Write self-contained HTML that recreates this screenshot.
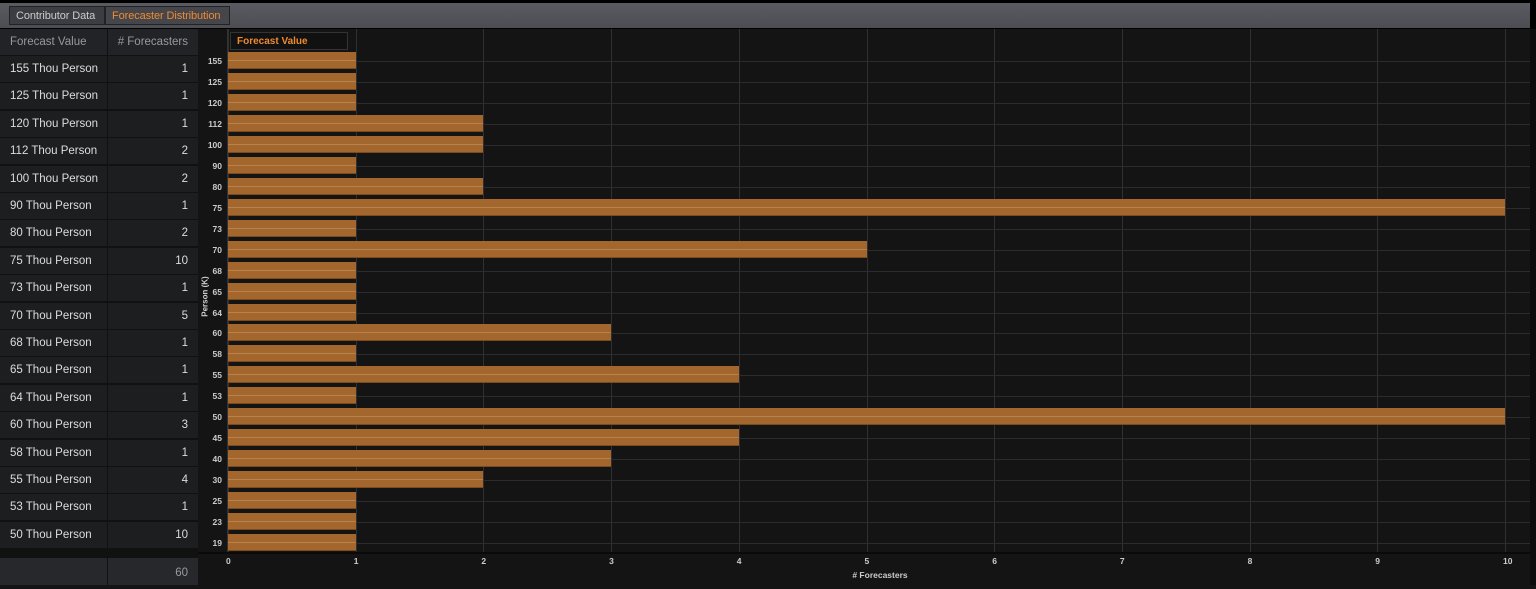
<!DOCTYPE html><html><head><style>
body{margin:0;width:1536px;height:585px;background:#141414;overflow:hidden;font-family:"Liberation Sans",sans-serif;position:relative}
.a{position:absolute}
.top{left:0;top:0;width:1536px;height:29px;background:#000}
.bar0{left:0;top:3px;width:1530px;height:25px;background:linear-gradient(#5a5b62,#4c4d53)}
.tab{top:6px;height:19px;border:1px solid #222;font-size:11px;line-height:18px;padding:0 6px;box-sizing:border-box;white-space:nowrap;letter-spacing:-0.1px}
.cell{height:27px;box-sizing:border-box;font-size:11.5px;line-height:27px;color:#ddd;border-bottom:1px solid #111;white-space:nowrap}
.c1{left:0;width:107px;background:#1d1e20;padding-left:10px}
.c2{left:108px;width:90px;background:#1d1e20;text-align:right;padding-right:10px}
.gv{width:1px;background:#303030;top:29px;height:523px}
.gh{height:1px;background:#2c2c2c;left:228px;width:1302px}
.b{left:228px;height:17px;background:#a3662c;box-shadow:inset 0 -1px 0 #7a4b1f}
.b:after{content:"";position:absolute;left:0;right:0;top:8px;height:1px;background:#b7824d}
.yl{left:200px;width:22px;text-align:right;font-size:8.5px;font-weight:bold;color:#ccc}
.xl{top:556px;font-size:8.5px;font-weight:bold;color:#ccc}
</style></head><body>
<div class="a top"></div><div class="a bar0"></div>
<div class="a tab" style="left:9px;width:96px;background:#3c3d42;color:#ccc">Contributor Data</div>
<div class="a tab" style="left:105px;width:125px;background:#45464c;color:#f08a30">Forecaster Distribution</div>
<div class="a" style="left:198px;top:29px;width:30px;height:556px;background:#141414"></div>
<div class="a" style="left:0;top:29px;width:198px;height:556px;background:#111"></div>
<div class="a cell c1" style="top:29px;color:#999;background:#222326">Forecast Value</div>
<div class="a cell c2" style="top:29px;color:#999;background:#222326"># Forecasters</div>
<div id="rows"></div>
<div class="a" style="left:0;top:558px;width:107px;height:27px;background:#27282c"></div>
<div class="a" style="left:108px;top:558px;width:90px;height:27px;background:#27282c;color:#999;font-size:11.5px;line-height:31px;text-align:right;padding-right:10px;box-sizing:border-box">60</div>
<div class="a" style="left:227px;top:29px;width:1303px;height:523px;background:#141414;border-left:1px solid #333"></div>
<div class="a" style="left:1530px;top:29px;width:6px;height:556px;background:#0c0c0c"></div>
<div class="a" style="left:198px;top:552px;width:1332px;height:2px;background:#0a0a0a"></div>
<div id="ch"></div>
<div class="a" style="left:230px;top:32px;width:118px;height:18px;background:#111;border:1px solid #333;color:#f08a30;font-size:10px;font-weight:bold;line-height:18px;padding-left:6px;box-sizing:border-box">Forecast Value</div>
<div class="a" style="left:183px;top:292px;width:44px;font-size:8px;font-weight:bold;color:#ccc;transform:rotate(-90deg);text-align:center">Person (K)</div>
<div class="a" style="left:830px;top:570px;width:100px;text-align:center;font-size:8.5px;font-weight:bold;color:#ccc"># Forecasters</div>
<script>
var d=[[155,1],[125,1],[120,1],[112,2],[100,2],[90,1],[80,2],[75,10],[73,1],[70,5],[68,1],[65,1],[64,1],[60,3],[58,1],[55,4],[53,1],[50,10]];
var h='';d.forEach(function(r,i){var y=56+i*27.4;h+='<div class="a cell c1" style="top:'+y+'px">'+r[0]+' Thou Person</div><div class="a cell c2" style="top:'+y+'px">'+r[1]+'</div>';});
document.getElementById('rows').innerHTML=h;
var c=[[155,1],[125,1],[120,1],[112,2],[100,2],[90,1],[80,2],[75,10],[73,1],[70,5],[68,1],[65,1],[64,1],[60,3],[58,1],[55,4],[53,1],[50,10],[45,4],[40,3],[30,2],[25,1],[23,1],[19,1]];
var s=127.7,g='';
for(var k=0;k<=10;k++)g+='<div class="a gv" style="left:'+(228+k*s)+'px"></div><div class="a xl" style="left:'+(226+k*s)+'px">'+k+'</div>';
c.forEach(function(r,i){var cy=60+i*20.96;g+='<div class="a gh" style="top:'+(cy+1)+'px"></div>';});
c.forEach(function(r,i){var cy=60+i*20.96;g+='<div class="a b" style="top:'+(cy-8)+'px;width:'+(r[1]*s)+'px"></div><div class="a yl" style="top:'+(cy-4)+'px">'+r[0]+'</div>';});
document.getElementById('ch').innerHTML=g;
</script>
</body></html>
